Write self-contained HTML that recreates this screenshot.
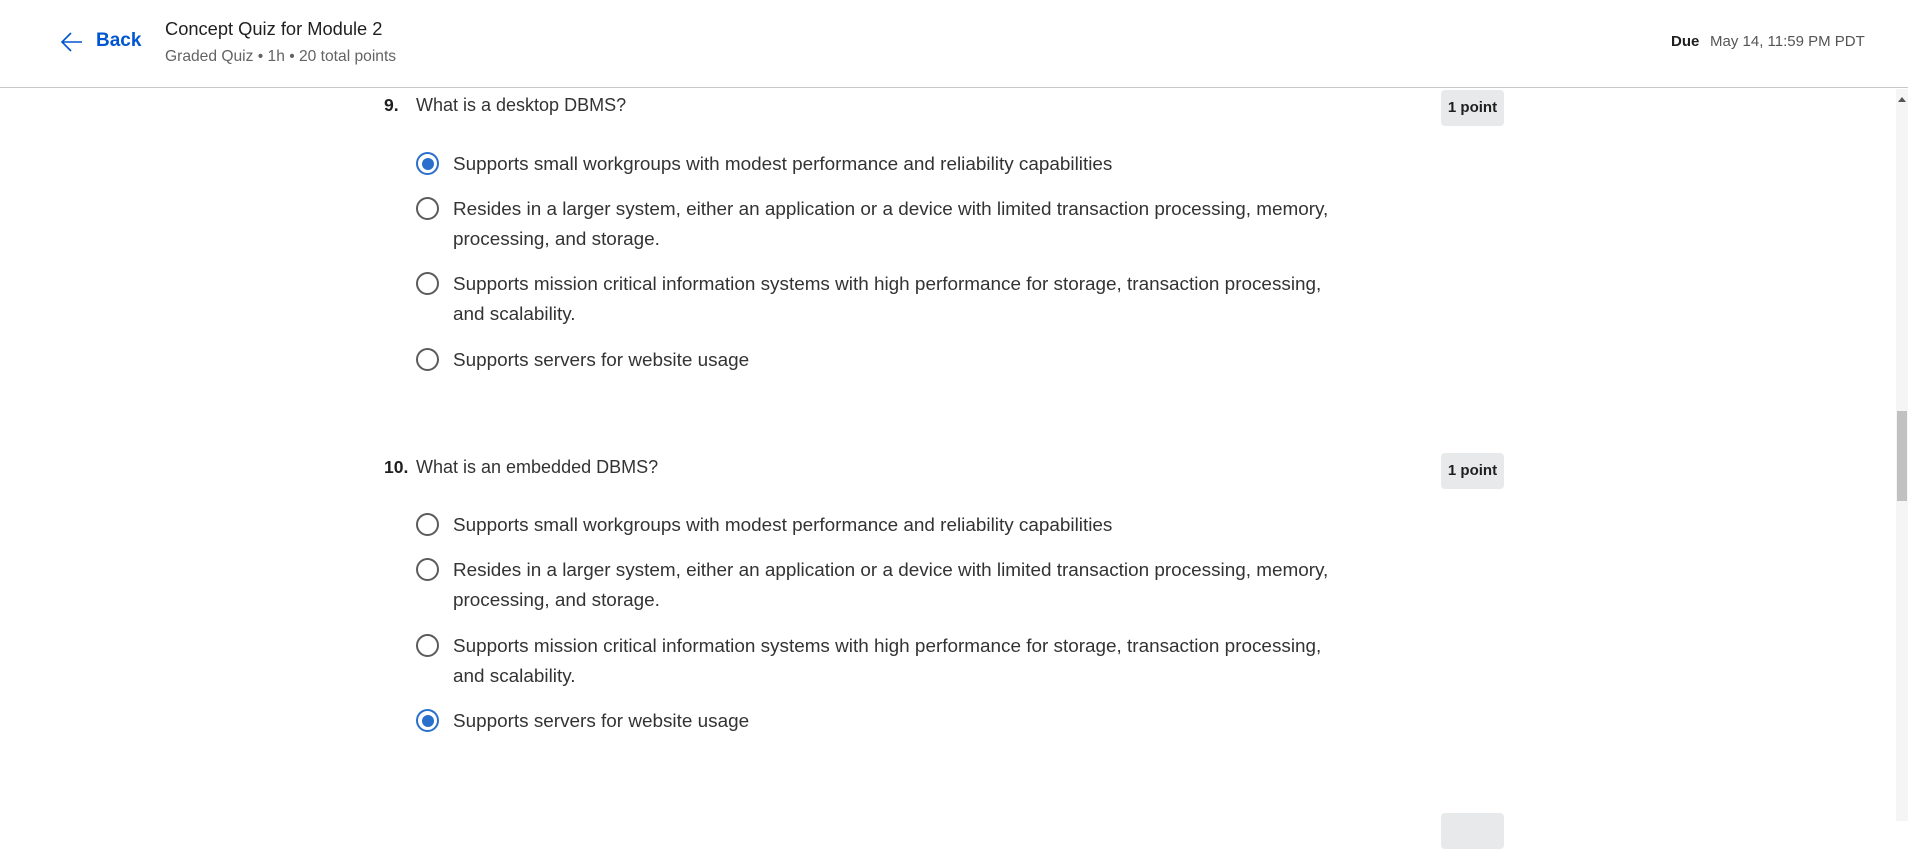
<!DOCTYPE html>
<html><head><meta charset="utf-8">
<style>
*{margin:0;padding:0;box-sizing:border-box}
body{width:1908px;height:821px;overflow:hidden;background:#fff;font-family:"Liberation Sans",sans-serif;color:#1f1f1f;position:relative}
.a{position:absolute;white-space:nowrap}
.hdr{position:absolute;left:0;top:0;width:1908px;height:88px;border-bottom:1px solid #c8c8c8;background:#fff}
.opt{position:absolute;left:453px;font-size:18.9px;color:#333;line-height:30px;white-space:nowrap}
.r{position:absolute;left:416px;width:23px;height:23px;border-radius:50%;border:2px solid #5b5b5b;background:#fff}
.r.on{border-color:#2a6fcc}
.r.on::after{content:"";position:absolute;left:3.5px;top:3.5px;width:12px;height:12px;border-radius:50%;background:#2a6fcc}
.q{position:absolute;font-size:18px;color:#333;white-space:nowrap}
.num{position:absolute;left:384px;font-size:17.5px;font-weight:bold;color:#1f1f1f}
.badge{position:absolute;left:1441px;width:63px;height:36px;background:#e8e9ea;border-radius:4px;font-size:15px;font-weight:bold;line-height:36px;text-align:center;color:#1f1f1f}
</style></head><body>
<div class="hdr"></div>
<svg class="a" style="left:60px;top:31px" width="24" height="22" viewBox="0 0 24 22"><path d="M22 11H2M11 2L2 11l9 9" fill="none" stroke="#0056d2" stroke-width="1.6"/></svg>
<div class="a" style="left:96px;top:30px;font-size:19px;font-weight:bold;color:#0056d2">Back</div>
<div class="a" style="left:165px;top:18px;font-size:18.3px;color:#1f1f1f">Concept Quiz for Module 2</div>
<div class="a" style="left:165px;top:48px;font-size:15.6px;color:#636363">Graded Quiz • 1h • 20 total points</div>
<div class="a" style="left:1671px;top:33px;font-size:15px;font-weight:bold;color:#1f1f1f">Due</div>
<div class="a" style="left:1710px;top:33px;font-size:15px;color:#555">May 14, 11:59 PM PDT</div>

<div class="a" style="left:1896px;top:89px;width:12px;height:732px;background:#f5f5f5"></div>
<div class="a" style="left:1898px;top:97px;width:0;height:0;border-left:4px solid transparent;border-right:4px solid transparent;border-bottom:5px solid #555"></div>
<div class="a" style="left:1897px;top:411px;width:10px;height:90px;background:#c1c1c1"></div>

<div class="num" style="top:95px">9.</div>
<div class="q" style="left:416px;top:95px">What is a desktop DBMS?</div>
<div class="badge" style="top:90px">1 point</div>
<div class="r on" style="top:152px"></div>
<div class="opt" style="top:150px">Supports small workgroups with modest performance and reliability capabilities</div>
<div class="r" style="top:197px"></div>
<div class="opt" style="top:195px">Resides in a larger system, either an application or a device with limited transaction processing, memory,<br>processing, and storage.</div>
<div class="r" style="top:272px"></div>
<div class="opt" style="top:270px">Supports mission critical information systems with high performance for storage, transaction processing,<br>and scalability.</div>
<div class="r" style="top:348px"></div>
<div class="opt" style="top:346px">Supports servers for website usage</div>

<div class="num" style="top:457px">10.</div>
<div class="q" style="left:416px;top:457px">What is an embedded DBMS?</div>
<div class="badge" style="top:453px">1 point</div>
<div class="r" style="top:513px"></div>
<div class="opt" style="top:511px">Supports small workgroups with modest performance and reliability capabilities</div>
<div class="r" style="top:558px"></div>
<div class="opt" style="top:556px">Resides in a larger system, either an application or a device with limited transaction processing, memory,<br>processing, and storage.</div>
<div class="r" style="top:634px"></div>
<div class="opt" style="top:632px">Supports mission critical information systems with high performance for storage, transaction processing,<br>and scalability.</div>
<div class="r on" style="top:709px"></div>
<div class="opt" style="top:707px">Supports servers for website usage</div>

<div class="badge" style="top:813px"></div>
</body></html>
